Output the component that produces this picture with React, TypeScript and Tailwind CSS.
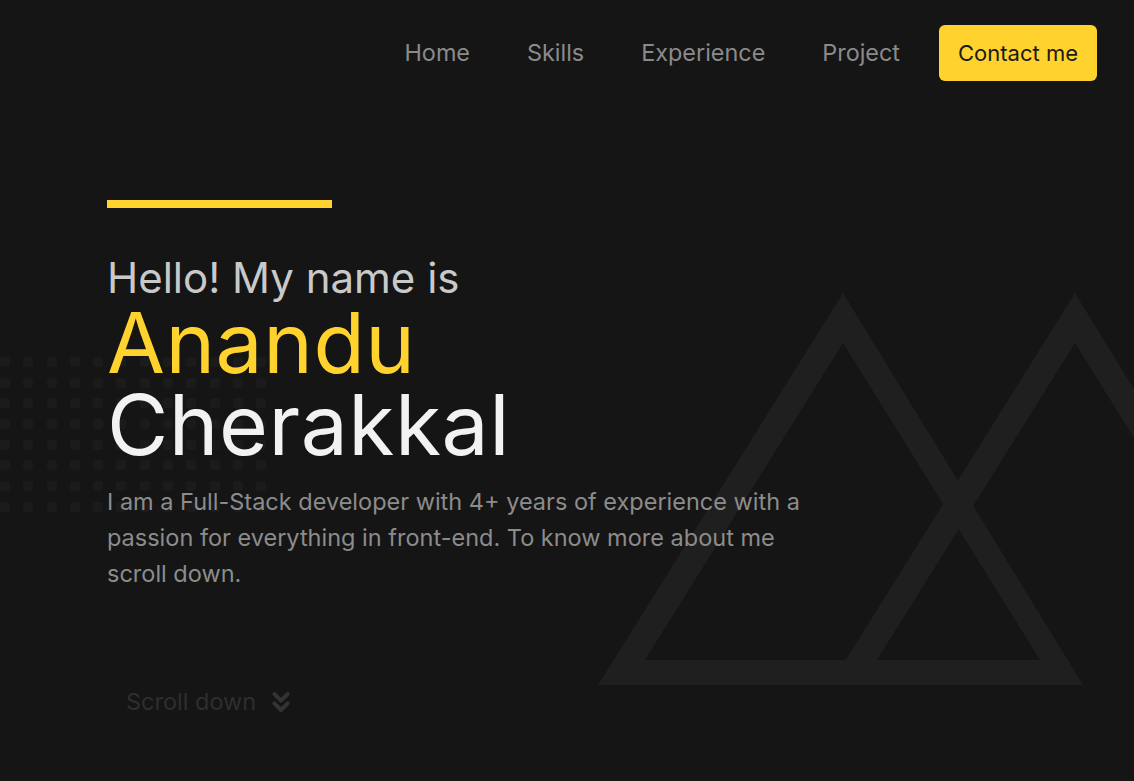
import React from 'react';
import { ChevronsDown } from 'lucide-react';

const links = ['Home', 'Skills', 'Experience', 'Project'];

const DotGrid: React.FC = () => (
    <div className="absolute left-0 top-[357px] grid grid-cols-[repeat(12,10px)] gap-x-[13.3px] gap-y-[10.7px]">
        {Array.from({ length: 96 }).map((_, i) => (
            <div key={i} className="w-[10px] h-[10px] rounded-[3px] bg-[#1b1b1b]" />
        ))}
    </div>
);

// two big outlined triangles behind the hero, right one has no visible base
const Triangles: React.FC = () => (
    <svg className="absolute left-0 top-0" width="1134" height="781" viewBox="0 0 1134 781">
        <defs>
            <clipPath id="rightClip">
                <polygon points="0,0 1134,0 1134,655 1064.6,655 1083,685 0,685" />
            </clipPath>
        </defs>
        <path
            fill="#1f1f1f"
            fillRule="evenodd"
            d="M843 293 L1083 685 L598 685 Z M843 343 L645 660 L1040 660 Z"
        />
        <path
            fill="#1f1f1f"
            fillRule="evenodd"
            clipPath="url(#rightClip)"
            d="M1075 293 L1315 685 L830 685 Z M1075 343 L877 660 L1272 660 Z"
        />
    </svg>
);

export default function App() {
    return (
        <div
            className="relative w-[1134px] h-[781px] overflow-hidden bg-[#151515]"
            style={{ fontFamily: 'Inter, "Noto Sans", sans-serif' }}
        >
            <Triangles />
            <DotGrid />

            <div className="relative">
                {/* Nav */}
                <nav className="flex items-center justify-end pt-[25px] pr-[37px]">
                    <div className="flex items-center gap-[57px] text-[23.4px] text-[#8a8a8a]">
                        {links.map((l) => (
                            <a key={l} className="leading-none">{l}</a>
                        ))}
                    </div>
                    <button className="ml-[39px] h-[56px] w-[158px] rounded-[6px] bg-[#ffd22e] text-[22px] text-[#1a1a1a]">
                        Contact me
                    </button>
                </nav>

                {/* Hero */}
                <div className="pl-[107px] pt-[119px]">
                    <div className="w-[225px] h-[8px] bg-[#ffd22e]" />
                    <h2 className="mt-[46px] text-[42px] leading-[48px] text-[#c9c9c9]">Hello! My name is</h2>
                    <h1 className="text-[84px] leading-[82px] tracking-[0.5px]">
                        <span className="block text-[#ffd22e]">Anandu</span>
                        <span className="block text-[#f2f2f2]">Cherakkal</span>
                    </h1>
                    <p className="mt-[18px] w-[720px] text-[23.5px] leading-[36px] text-[#8c8c8c]">
                        I am a Full-Stack developer with 4+ years of experience with a passion for everything in front-end. To know more about me scroll down.
                    </p>
                    <div className="mt-[92px] ml-[19px] flex items-center gap-[9px] text-[23.5px] text-[#2e2e2e]">
                        <span>Scroll down</span>
                        <ChevronsDown size={32} strokeWidth={3} className="text-[#333333]" />
                    </div>
                </div>
            </div>
        </div>
    );
}
